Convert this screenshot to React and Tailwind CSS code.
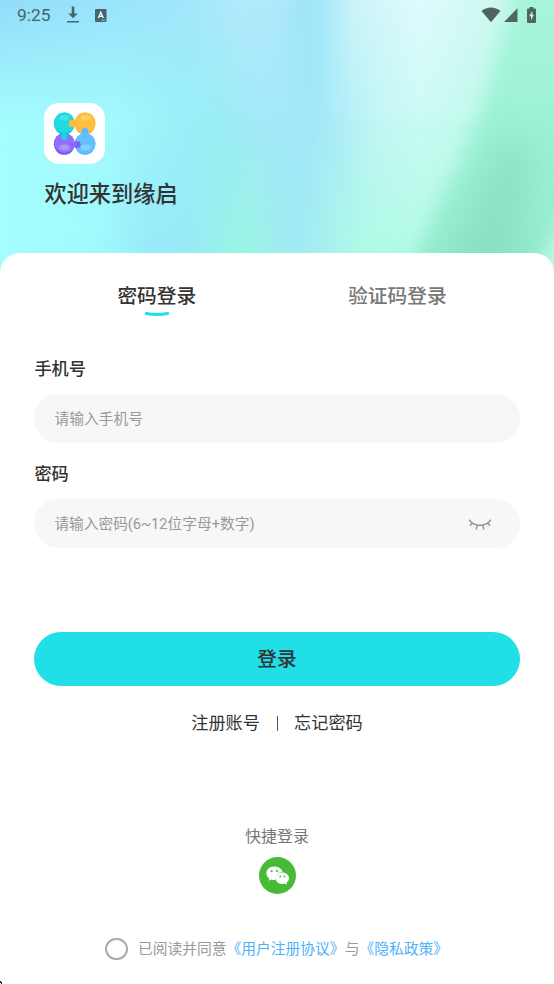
import React from "react";

function Backdrop() {
  return (
    <svg className="absolute inset-x-0 top-0 h-[280px] w-[554px]" viewBox="0 0 554 280" aria-hidden="true">
      <defs>
        <linearGradient id="rowTop" gradientUnits="userSpaceOnUse" x1="0" y1="0" x2="554" y2="0">
          <stop offset="0" stopColor="#93dcf9" />
          <stop offset=".2" stopColor="#99e4fb" />
          <stop offset=".34" stopColor="#a2e7fb" />
          <stop offset=".43" stopColor="#b2eafd" />
          <stop offset=".5" stopColor="#b0eafc" />
          <stop offset=".55" stopColor="#a0e5fa" />
          <stop offset=".58" stopColor="#a5e8fa" />
          <stop offset=".64" stopColor="#ccf5f9" />
          <stop offset=".76" stopColor="#e0fafe" />
          <stop offset=".86" stopColor="#d2f9f4" />
          <stop offset="1" stopColor="#cdf9ec" />
        </linearGradient>
        <linearGradient id="rowMid" gradientUnits="userSpaceOnUse" x1="0" y1="0" x2="554" y2="0">
          <stop offset="0" stopColor="#a5fdfe" />
          <stop offset=".2" stopColor="#a3fafd" />
          <stop offset=".33" stopColor="#9af0f9" />
          <stop offset=".4" stopColor="#99edf5" />
          <stop offset=".47" stopColor="#a4e9fa" />
          <stop offset=".56" stopColor="#a0e7fa" />
          <stop offset=".62" stopColor="#b1eef8" />
          <stop offset=".69" stopColor="#c4f7f5" />
          <stop offset=".76" stopColor="#cafbf3" />
          <stop offset="1" stopColor="#b8f8e5" />
        </linearGradient>
        <linearGradient id="rowLow" gradientUnits="userSpaceOnUse" x1="0" y1="0" x2="554" y2="0">
          <stop offset="0" stopColor="#a4fefe" />
          <stop offset=".17" stopColor="#a1f9fd" />
          <stop offset=".27" stopColor="#98eaf9" />
          <stop offset=".34" stopColor="#98e9f6" />
          <stop offset=".4" stopColor="#98f1ea" />
          <stop offset=".44" stopColor="#9af4e3" />
          <stop offset=".5" stopColor="#9eedee" />
          <stop offset=".54" stopColor="#a0eaf5" />
          <stop offset=".59" stopColor="#a7f1ed" />
          <stop offset=".66" stopColor="#affae6" />
          <stop offset=".75" stopColor="#b3fae6" />
          <stop offset="1" stopColor="#b3f8e1" />
        </linearGradient>
        <linearGradient id="fadeMid" x1="0" y1="0" x2="0" y2="1">
          <stop offset="0" stopColor="#000" />
          <stop offset=".45" stopColor="#fff" />
        </linearGradient>
        <linearGradient id="fadeLow" x1="0" y1="0" x2="0" y2="1">
          <stop offset=".4" stopColor="#000" />
          <stop offset=".88" stopColor="#fff" />
        </linearGradient>
        <linearGradient id="leaf" gradientUnits="userSpaceOnUse" x1="0" y1="0" x2="0" y2="260">
          <stop offset="0" stopColor="#a8f5dc" />
          <stop offset=".45" stopColor="#9df2d6" />
          <stop offset="1" stopColor="#96edd0" />
        </linearGradient>
        <mask id="maskMid"><rect width="554" height="280" fill="url(#fadeMid)" /></mask>
        <mask id="maskLow"><rect width="554" height="280" fill="url(#fadeLow)" /></mask>
        <filter id="soft" x="-50%" y="-50%" width="200%" height="200%" colorInterpolationFilters="sRGB"><feGaussianBlur stdDeviation="9" /></filter>
        <filter id="softer" x="-60%" y="-60%" width="220%" height="220%" colorInterpolationFilters="sRGB"><feGaussianBlur stdDeviation="18" /></filter>
      </defs>
      <rect width="554" height="280" fill="url(#rowTop)" />
      <rect width="554" height="280" fill="url(#rowMid)" mask="url(#maskMid)" />
      <rect width="554" height="280" fill="url(#rowLow)" mask="url(#maskLow)" />
      <path d="M514-30C505 20 492 90 465 150S428 225 402 290H600V-30Z" fill="url(#leaf)" filter="url(#soft)" />
      <path d="M505 130C480 190 455 225 428 310H515C528 240 530 190 532 140Z" fill="#86dcc1" opacity=".75" filter="url(#softer)" />
      <path d="M580 185L528 290H600V185Z" fill="#c0fae8" filter="url(#soft)" />
    </svg>
  );
}

function StatusBar() {
  return (
    <div className="relative flex h-[30px] items-center justify-between pl-[17px] pr-[18px] text-[#48646a]">
      <div className="flex items-center">
        <span className="w-[50px] font-['Roboto',sans-serif] text-[17.400px] leading-[30px]">9:25</span>
        <svg className="h-[18px] w-[12px]" viewBox="0 0 12 18" fill="currentColor">
          <path d="M4.700 .5h2.600v7h3.400L6 12.200 1.300 7.500h3.400zM0 14.900h12v1.700H0z" />
        </svg>
        <svg className="ml-[15.500px] h-[13px] w-[12px]" viewBox="0 0 12 13">
          <rect width="11.500" height="13" rx="1.300" fill="currentColor" />
          <path d="M3.300 9L5.800 3.200l2.500 5.800M4.200 7.200h3.200" stroke="#d5fbff" strokeWidth="1.400" fill="none" />
          <path d="M6.500 11.200h3.500" stroke="#a4dce6" strokeWidth=".8" />
        </svg>
      </div>
      <div className="flex items-center text-[#50655f]">
        <svg className="h-4 w-[20px]" viewBox="0 0 20 16" fill="currentColor">
          <path d="M.5 4.100C6-.8 14-.8 19.500 4.100L10 15.200z" />
        </svg>
        <svg className="ml-[3px] h-[14px] w-[14px]" viewBox="0 0 14 14" fill="currentColor"><path d="M13.500 .3V14H0z" /></svg>
        <svg className="ml-[9.500px] h-[16px] w-[9px]" viewBox="0 0 9 16">
          <path d="M2.600 0h3.800v1.500H8q1 0 1 1V15q0 1-1 1H1q-1 0-1-1V2.500q0-1 1-1h1.600z" fill="currentColor" />
          <path d="M5.300 4L2 9.300h2V13.300l3-5.500H5.300z" fill="#b5f7e2" />
        </svg>
      </div>
    </div>
  );
}

function AppLogo() {
  return (
    <div className="flex h-[61px] w-[61px] items-center justify-center rounded-[15px] bg-white">
      <svg className="h-[61px] w-[61px]" viewBox="0 0 61 61">
        <ellipse cx="20.300" cy="20.600" rx="10.500" ry="11" fill="#12d0da" />
        <ellipse cx="20.600" cy="19.800" rx="10" ry="10.200" fill="#20dbe2" />
        <ellipse cx="41" cy="20.600" rx="10.500" ry="11" fill="#fbb036" />
        <ellipse cx="41.300" cy="19.800" rx="10.200" ry="10.200" fill="#ffbf3e" />
        <ellipse cx="20.300" cy="41" rx="10.500" ry="10.800" fill="#7653f2" />
        <ellipse cx="20.600" cy="40.200" rx="10" ry="9.800" fill="#9270ff" />
        <ellipse cx="41" cy="41" rx="10.500" ry="10.800" fill="#5ab9fc" />
        <ellipse cx="41.300" cy="40.200" rx="10.200" ry="9.900" fill="#62c0ff" />
        <circle cx="28.300" cy="20.400" r="3.600" fill="#ffb83b" /><path d="M28 18.700h6v3.700h-6z" fill="#ffbb3c" />
        <circle cx="20.300" cy="33.500" r="3.400" fill="#19d4dc" /><path d="M18.500 28h3.800v6h-3.800z" fill="#19d4dc" />
        <circle cx="40.900" cy="28.300" r="3.500" fill="#5ebcfc" /><path d="M39 28h3.900v6H39z" fill="#5ebcfc" />
        <circle cx="33.200" cy="41.500" r="3.500" fill="#8061f6" /><path d="M27 39.700h6v3.600h-6z" fill="#8968fb" />
        <ellipse cx="20.300" cy="15" rx="5" ry="2.800" fill="#53e9ed" opacity=".6" />
        <ellipse cx="41.600" cy="15" rx="5" ry="2.800" fill="#ffd463" opacity=".8" />
        <ellipse cx="20.300" cy="44.500" rx="5" ry="2.900" fill="#b09afd" opacity=".85" />
        <ellipse cx="41.600" cy="44.500" rx="5" ry="2.900" fill="#89d6ff" opacity=".85" />
      </svg>
    </div>
  );
}

function ClosedEye() {
  return (
    <svg className="h-3 w-6" viewBox="0 0 24 12" fill="none" stroke="#969696" strokeWidth="1.500" strokeLinecap="round">
      <path d="M1.500 1.200C6.500 8 17.500 8 22.500 1.200M4.200 4L2.400 6.500M9.200 6.300L8.300 9.900M14.800 6.300l.9 3.600M19.800 4l1.800 2.500" />
    </svg>
  );
}

function WeChat() {
  return (
    <svg className="h-[37px] w-[37px]" viewBox="0 0 37 37">
      <circle cx="18.500" cy="18.500" r="18.500" fill="#46bb36" />
      <path d="M15.200 9.600c-4.500 0-7.800 2.900-7.800 6.600 0 2.200 1.100 4 2.900 5.200l-.7 2.400 2.800-1.400c1.500.5 2.800.6 4.300.4-.6-4.500 2.800-7.900 6.900-7.800-.9-3.300-4.200-5.400-8.400-5.400z" fill="#fff" />
      <path d="M23.300 15.600c-3.900 0-6.700 2.500-6.700 5.700s2.900 5.700 6.700 5.700c.8 0 1.600-.1 2.400-.4l2.300 1.200-.6-2c1.600-1.100 2.600-2.700 2.600-4.500 0-3.200-2.900-5.700-6.700-5.700z" fill="#fff" />
      <g fill="#46bb36">
        <circle cx="12.700" cy="14.100" r="1.100" /><circle cx="17.900" cy="14.100" r="1.100" />
        <circle cx="21.200" cy="19.500" r=".9" /><circle cx="25.500" cy="19.500" r=".9" />
      </g>
    </svg>
  );
}

export default function App() {
  return (
    <main className="relative flex h-[984px] w-[554px] flex-col overflow-hidden bg-white font-['Roboto','Noto_Sans_CJK_SC',sans-serif] text-[#333]">
      <Backdrop />
      <StatusBar />
      <header className="relative h-[223px] pl-[44px] pt-[73px]">
        <AppLogo />
        <h1 className="mt-[13px] pl-[0.500px] text-[22.200px] font-medium leading-[34px]">欢迎来到缘启</h1>
      </header>

      <section className="relative flex flex-1 flex-col rounded-t-[20px] bg-white px-[34.400px]">
        <div className="flex h-[81px] justify-between pl-[83px] pr-[73px] pt-[29px] text-[19.700px] leading-[30px]">
          <div className="flex flex-col items-center font-medium">
            <span>密码登录</span>
            <svg className="-mt-px h-[6px] w-[26px]" viewBox="0 0 26 6" fill="none">
              <path d="M2.300 2.500Q13 4.500 23.700 2.500" stroke="#20dfe7" strokeWidth="3" strokeLinecap="round" />
            </svg>
          </div>
          <div className="font-medium text-[#777]">验证码登录</div>
        </div>

        <label className="mt-[20px] text-[17.200px] font-medium leading-[30px]">手机号</label>
        <div className="mt-[10px] flex h-[49px] items-center rounded-full bg-[#f7f7f7] pl-[20px] pt-[2px] text-[14.770px] text-[#999]">请输入手机号</div>

        <label className="mt-[16px] text-[17.200px] font-medium leading-[30px]">密码</label>
        <div className="mt-[10px] flex h-[49px] items-center justify-between rounded-full bg-[#f7f7f7] pl-[20px] pr-[28px] pt-[2px] text-[14.700px] text-[#999]">
          <span>请输入密码(6~12位字母+数字)</span>
          <ClosedEye />
        </div>

        <button className="mt-[84px] h-[54px] rounded-full bg-[#20dfe7] pt-[2px] text-[19.700px] font-medium">登录</button>
        <div className="mt-[22px] flex items-center justify-center text-[17.200px] leading-[30px]">
          <span>注册账号</span>
          <i className="mx-[16.500px] h-[15px] w-px bg-[#555]" />
          <span>忘记密码</span>
        </div>

        <div className="mt-[84px] flex flex-col items-center">
          <p className="text-[16px] leading-[30px] text-[#777]">快捷登录</p>
          <div className="mt-[5px]"><WeChat /></div>
        </div>

        <div className="mt-[40px] flex h-[30px] items-center whitespace-nowrap pl-[71px] text-[14.770px] text-[#999]">
          <i className="mr-[10px] h-[22.500px] w-[22.500px] shrink-0 rounded-full border-2 border-[#aaa]" />
          <span>已阅读并同意<span className="text-[#4db2fa]">《用户注册协议》</span>与<span className="text-[#4db2fa]">《隐私政策》</span></span>
        </div>
      </section>
      <svg className="absolute bottom-0 left-0 h-[3px] w-[2px]" viewBox="0 0 2 3"><path d="M0 0h1v1h1v2H1V2H0z" fill="#222" /></svg>
    </main>
  );
}
